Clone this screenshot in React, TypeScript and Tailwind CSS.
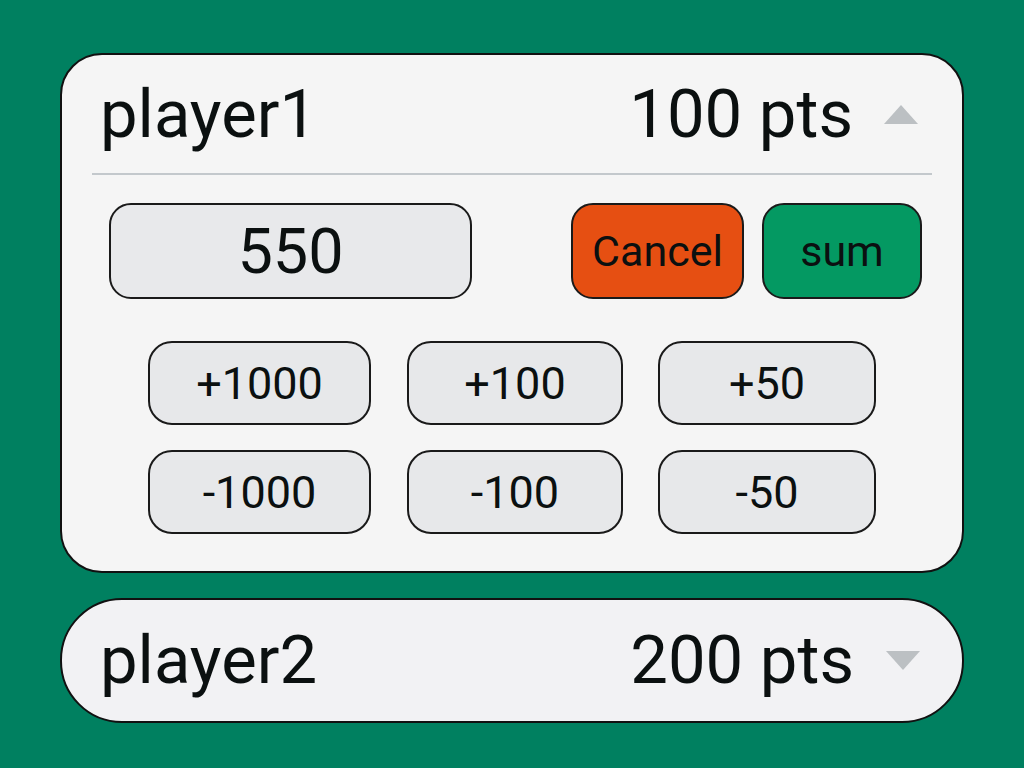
import React from "react";

const font = { fontFamily: "Roboto, 'Noto Sans', sans-serif" };

const Caret = ({ up }: { up: boolean }) => (
  <svg width="34" height="19" viewBox="0 0 34 19" className="shrink-0">
    {up ? <polygon points="17,0 34,19 0,19" fill="#bcc0c3" /> : <polygon points="0,0 34,0 17,19" fill="#bcc0c3" />}
  </svg>
);

const StepButton = ({ label, width }: { label: string; width: string }) => (
  <button className={`${width} h-[84px] rounded-[24px] border-2 border-[#1a1a1a] bg-[#e7e8ea] text-[45px] text-[#0b1010] flex items-center justify-center leading-none`}>
    {label}
  </button>
);

export default function App() {
  return (
    <div className="min-h-screen w-full bg-[#008060] px-[60px] pt-[53px] pb-[40px]" style={font}>
      {/* Open player */}
      <div className="h-[520px] rounded-[42px] border-2 border-[#111] bg-[#f5f5f5]">
        <div className="flex h-[118px] items-center pl-[38px] pr-[44px] text-[67px] text-[#0b1010]">
          <span className="leading-none">player1</span>
          <span className="ml-auto mr-[31px] leading-none">100 pts</span>
          <Caret up />
        </div>
        <div className="mx-[30px] h-[2px] bg-[#c3c8cc]" />

        <div className="mt-[28px] flex pl-[47px]">
          <div className="flex h-[96px] w-[363px] items-center justify-center rounded-[22px] border-2 border-[#1a1a1a] bg-[#e8e9eb] text-[63px] leading-none text-[#0b1010]">
            550
          </div>
          <button className="ml-[99px] flex h-[96px] w-[173px] items-center justify-center rounded-[22px] border-2 border-[#1a1a1a] bg-[#e64f12] text-[43px] leading-none text-[#0b1010]">
            Cancel
          </button>
          <button className="ml-[18px] flex h-[96px] w-[160px] items-center justify-center rounded-[22px] border-2 border-[#1a1a1a] bg-[#049962] text-[43px] leading-none text-[#0b1010]">
            sum
          </button>
        </div>

        <div className="mt-[42px] flex flex-col gap-[25px] pl-[86px]">
          <div className="flex">
            <StepButton label="+1000" width="w-[223px]" />
            <div className="w-[36px]" />
            <StepButton label="+100" width="w-[216px]" />
            <div className="w-[35px]" />
            <StepButton label="+50" width="w-[218px]" />
          </div>
          <div className="flex">
            <StepButton label="-1000" width="w-[223px]" />
            <div className="w-[36px]" />
            <StepButton label="-100" width="w-[216px]" />
            <div className="w-[35px]" />
            <StepButton label="-50" width="w-[218px]" />
          </div>
        </div>
      </div>

      {/* Collapsed player */}
      <div className="mt-[25px] flex h-[125px] items-center rounded-[62px] border-2 border-[#111] bg-[#f2f2f4] pl-[38px] pr-[42px] text-[67px] text-[#0b1010]">
        <span className="leading-none">player2</span>
        <span className="ml-auto mr-[32px] leading-none">200 pts</span>
        <Caret up={false} />
      </div>
    </div>
  );
}
